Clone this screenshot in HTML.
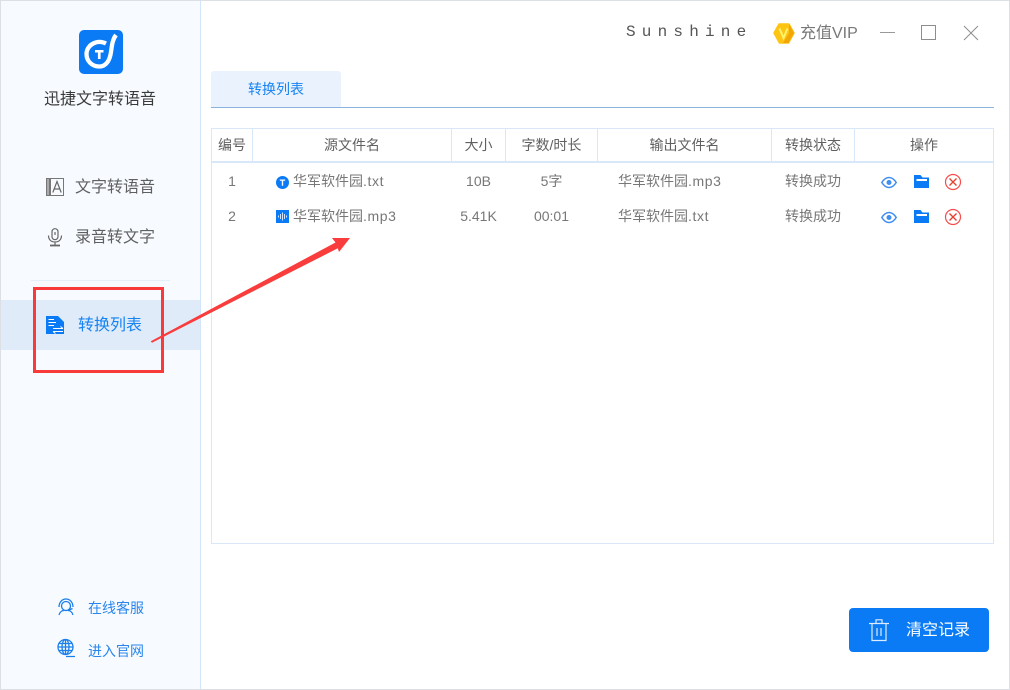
<!DOCTYPE html>
<html lang="zh"><head><meta charset="utf-8"><title>迅捷文字转语音</title>
<style>
html,body{margin:0;padding:0;background:#fff}
#w{position:relative;width:1010px;height:690px;overflow:hidden;background:#fff;font-family:"Liberation Sans","Noto Sans CJK SC",sans-serif;color:#777}
.a{position:absolute;white-space:nowrap}
.t{position:absolute;white-space:nowrap;line-height:20px;height:20px}
.c{text-align:center}
.l{letter-spacing:.6px}
svg{position:absolute;overflow:visible}
</style></head><body><div id="w">
<div class="a" style="left:1px;top:1px;width:199px;height:688px;background:#f7fbff"></div>
<div class="a" style="left:200px;top:1px;width:1px;height:688px;background:#d3e5f8"></div>
<div class="a" style="left:0;top:0;width:1010px;height:1px;background:#dcdfe3"></div>
<div class="a" style="left:0;top:689px;width:1010px;height:1px;background:#dcdfe3"></div>
<div class="a" style="left:0;top:0;width:1px;height:690px;background:#dcdfe3"></div>
<div class="a" style="left:1009px;top:0;width:1px;height:690px;background:#dcdfe3"></div>

<svg style="left:79px;top:30px" width="44" height="44" viewBox="0 0 44 44">
<rect width="44" height="44" rx="5" fill="#0a7bf4"/>
<path d="M27 13.500C18 9 7.500 15 7.500 24C7.500 31 13 36.500 20 36.500C28 36.500 31 29 32 22C33 15 33.500 9.500 37 5" fill="none" stroke="#fff" stroke-width="4.300"/>
<path d="M16 20H24.500V22.500H21.600V29H18.900V22.500H16Z" fill="#fff"/>
</svg>
<div class="t" style="left:44px;top:90px;font-size:16px;color:#3a3a3a">迅捷文字转语音</div>

<svg style="left:45px;top:177px" width="20" height="20" viewBox="0 0 20 20" fill="none" stroke="#777" stroke-width="1">
<rect x="1.500" y="1.500" width="3" height="17" fill="#aaa"/><rect x="5.500" y="1.500" width="13" height="17"/>
<path d="M7.800 15.500L12 4.500L16.200 15.500M9.300 12H14.700" stroke="#666" stroke-width="1.200"/></svg>
<div class="t" style="left:75px;top:178px;font-size:16px;color:#606060">文字转语音</div>

<svg style="left:46px;top:228px" width="18" height="20" viewBox="0 0 18 20" fill="none" stroke="#666" stroke-width="1.200">
<rect x="6" y="0.700" width="6" height="11" rx="3"/><path d="M2.500 7.500C2.500 11.500 5 14 9 14S15.500 11.500 15.500 7.500M9 14V17"/><path d="M4 17.500H14" stroke-width="1.800"/><path d="M9 4V7"/></svg>
<div class="t" style="left:75px;top:228px;font-size:16px;color:#606060">录音转文字</div>

<div class="a" style="left:31px;top:280px;width:139px;height:1px;background:#e3eff9"></div>
<div class="a" style="left:1px;top:300px;width:199px;height:50px;background:#dfebf9"></div>
<svg style="left:46px;top:316px" width="19" height="19" viewBox="0 0 19 19">
<path d="M0 0H12L18 6V18H0Z" fill="#0a7bf4"/>
<path d="M2.500 3.500H8M2.500 6.500H10M2.500 9.500H8" stroke="#fff" stroke-width="1.100" fill="none"/>
<path d="M7 12.500H17M14.500 10.500L17 12.500M7 15.500H17M9.500 17.500L7 15.500" stroke="#fff" stroke-width="1" fill="none"/></svg>
<div class="t" style="left:78px;top:316px;font-size:16px;color:#1683f2">转换列表</div>
<div class="a" style="left:33px;top:287px;width:125px;height:80px;border:3px solid #f83a3a"></div>

<svg style="left:57px;top:598px" width="18" height="18" viewBox="0 0 18 18" fill="none" stroke="#1a7fea" stroke-width="1.300">
<path d="M2 9C2 4.500 5 1 9 1S16 4.500 16 9"/><circle cx="9" cy="8" r="4.500"/><path d="M2 17C3 13.500 5.500 12.500 7 12.500M16 17C15 13.500 12.500 12.500 11 12.500M15.500 10.500L12 12"/></svg>
<div class="t" style="left:88px;top:598px;font-size:14px;color:#2a86ec">在线客服</div>
<svg style="left:57px;top:639px" width="19" height="19" viewBox="0 0 19 19" fill="none" stroke="#1a7fea" stroke-width="1.300">
<circle cx="8.500" cy="8" r="7.500"/><ellipse cx="8.500" cy="8" rx="3.500" ry="7.500"/><path d="M1 8H16M2 4.500H15M2 11.500H15M8.500 .5V15.500M9 17.500H18" /></svg>
<div class="t" style="left:88px;top:641px;font-size:14px;color:#2a86ec">进入官网</div>

<div class="t" style="left:626px;top:22px;font-family:'Liberation Mono',monospace;font-size:16px;color:#555;letter-spacing:6.200px">Sunshine</div>
<svg style="left:773px;top:22px" width="22" height="22" viewBox="0 0 22 22">
<path d="M6 2H16L21 11L15.500 21H6.500L1 11Z" fill="#fdc413" stroke="#fdc413" stroke-linejoin="round" stroke-width="1.500"/>
<path d="M16 2L21 11L15.500 21H10L16 11Z" fill="#f2a705"/>
<path d="M6.500 6.500L10.500 16L14.500 6.500" fill="none" stroke="#fff36c" stroke-width="2"/></svg>
<div class="t" style="left:800px;top:24px;font-size:16px;color:#777">充值VIP</div>
<div class="a" style="left:880px;top:32px;width:15px;height:1px;background:#999"></div>
<div class="a" style="left:921px;top:25px;width:13px;height:13px;border:1px solid #8e8e8e"></div>
<svg style="left:964px;top:26px" width="14" height="14" viewBox="0 0 14 14"><path d="M0 0L14 14M14 0L0 14" stroke="#8e8e8e" stroke-width="1"/></svg>

<div class="a" style="left:211px;top:71px;width:130px;height:36px;background:#e9f2fd;border-radius:3px 3px 0 0"></div>
<div class="t c" style="left:211px;top:79px;width:130px;font-size:14px;color:#1683f2">转换列表</div>
<div class="a" style="left:211px;top:107px;width:783px;height:1px;background:#8cb2de"></div>

<div class="a" style="left:211px;top:128px;width:781px;height:414px;border:1px solid #d8e8f8"></div>
<div class="a" style="left:212px;top:161px;width:781px;height:2px;background:#d8e8f8"></div>
<div class="a" style="left:252px;top:129px;width:1px;height:32px;background:#d8e8f8"></div>
<div class="a" style="left:451px;top:129px;width:1px;height:32px;background:#d8e8f8"></div>
<div class="a" style="left:505px;top:129px;width:1px;height:32px;background:#d8e8f8"></div>
<div class="a" style="left:597px;top:129px;width:1px;height:32px;background:#d8e8f8"></div>
<div class="a" style="left:771px;top:129px;width:1px;height:32px;background:#d8e8f8"></div>
<div class="a" style="left:854px;top:129px;width:1px;height:32px;background:#d8e8f8"></div>

<div class="t c" style="left:212px;top:135px;width:40px;font-size:14px;color:#606060">编号</div>
<div class="t c" style="left:253px;top:135px;width:198px;font-size:14px;color:#606060">源文件名</div>
<div class="t c" style="left:452px;top:135px;width:53px;font-size:14px;color:#606060">大小</div>
<div class="t c" style="left:506px;top:135px;width:91px;font-size:14px;color:#606060">字数/时长</div>
<div class="t c" style="left:598px;top:135px;width:173px;font-size:14px;color:#606060">输出文件名</div>
<div class="t c" style="left:772px;top:135px;width:82px;font-size:14px;color:#606060">转换状态</div>
<div class="t c" style="left:855px;top:135px;width:138px;font-size:14px;color:#606060">操作</div>

<div class="t c" style="left:212px;top:171px;width:40px;font-size:14px">1</div>
<svg style="left:276px;top:176px" width="13" height="13" viewBox="0 0 13 13"><circle cx="6.500" cy="6.500" r="6.500" fill="#0a7bf4"/><path d="M3.800 3.500H9.200V4.800H7.200V9.800H5.800V4.800H3.800Z" fill="#fff"/></svg>
<div class="t" style="left:293px;top:171px;font-size:14px">华军软件园<span class="l">.txt</span></div>
<div class="t c" style="left:452px;top:171px;width:53px;font-size:14px">10B</div>
<div class="t c" style="left:506px;top:171px;width:91px;font-size:14px">5字</div>
<div class="t" style="left:618px;top:171px;font-size:14px">华军软件园<span class="l">.mp3</span></div>
<div class="t c" style="left:772px;top:171px;width:82px;font-size:14px">转换成功</div>

<div class="t c" style="left:212px;top:206px;width:40px;font-size:14px">2</div>
<svg style="left:276px;top:210px" width="13" height="13" viewBox="0 0 13 13"><rect width="13" height="13" fill="#0a7bf4"/><path d="M2.500 5.500V7.500M4.500 4V9M6.500 2.500V10.500M8.500 4V9M10.500 5.500V7.500" stroke="#cfe4ff" stroke-width="1" fill="none"/></svg>
<div class="t" style="left:293px;top:206px;font-size:14px">华军软件园<span class="l">.mp3</span></div>
<div class="t c" style="left:452px;top:206px;width:53px;font-size:14px">5.41K</div>
<div class="t c" style="left:506px;top:206px;width:91px;font-size:14px">00:01</div>
<div class="t" style="left:618px;top:206px;font-size:14px">华军软件园<span class="l">.txt</span></div>
<div class="t c" style="left:772px;top:206px;width:82px;font-size:14px">转换成功</div>

<svg style="left:881px;top:175px" width="80" height="16" viewBox="0 0 80 16">
<path d="M.8 7.500C3 4 5 2.500 8 2.500S13 4 15.200 7.500C13 11 11 12.500 8 12.500S3 11 .8 7.500Z" fill="none" stroke="#3f8ef0" stroke-width="1.500"/><circle cx="8" cy="7.500" r="2.500" fill="#3f8ef0"/>
<path d="M33 0H39.500L41.500 2.500H48V13H33Z" fill="#0a7bf4"/><rect x="35.500" y="4" width="10.500" height="2" fill="#fff"/>
<circle cx="72" cy="7" r="7.500" fill="none" stroke="#f84c4c" stroke-width="1.200"/><path d="M68.500 3.500L75.500 10.500M75.500 3.500L68.500 10.500" stroke="#e5432f" stroke-width="1.400"/>
</svg>
<svg style="left:881px;top:210px" width="80" height="16" viewBox="0 0 80 16">
<path d="M.8 7.500C3 4 5 2.500 8 2.500S13 4 15.200 7.500C13 11 11 12.500 8 12.500S3 11 .8 7.500Z" fill="none" stroke="#3f8ef0" stroke-width="1.500"/><circle cx="8" cy="7.500" r="2.500" fill="#3f8ef0"/>
<path d="M33 0H39.500L41.500 2.500H48V13H33Z" fill="#0a7bf4"/><rect x="35.500" y="4" width="10.500" height="2" fill="#fff"/>
<circle cx="72" cy="7" r="7.500" fill="none" stroke="#f84c4c" stroke-width="1.200"/><path d="M68.500 3.500L75.500 10.500M75.500 3.500L68.500 10.500" stroke="#e5432f" stroke-width="1.400"/>
</svg>

<div class="a" style="left:849px;top:608px;width:140px;height:44px;background:#0a7bf4;border-radius:4px"></div>
<svg style="left:869px;top:619px" width="20" height="22" viewBox="0 0 20 22" fill="none" stroke="#dcecff" stroke-width="1.200">
<path d="M0 4.500H20M3 4.500V21.500H17V4.500M7 4.500V.8H13V4.500M8 9V17M12 9V17"/></svg>
<div class="t" style="left:906px;top:621px;font-size:16px;color:#fff">清空记录</div>

<svg style="left:0;top:0" width="1010" height="690"><path d="M150.800 341.300L335.500 242.500L332 238H350L339 252L337.800 248.300L152 342.800Z" fill="#f93c3c"/></svg>
</div></body></html>
